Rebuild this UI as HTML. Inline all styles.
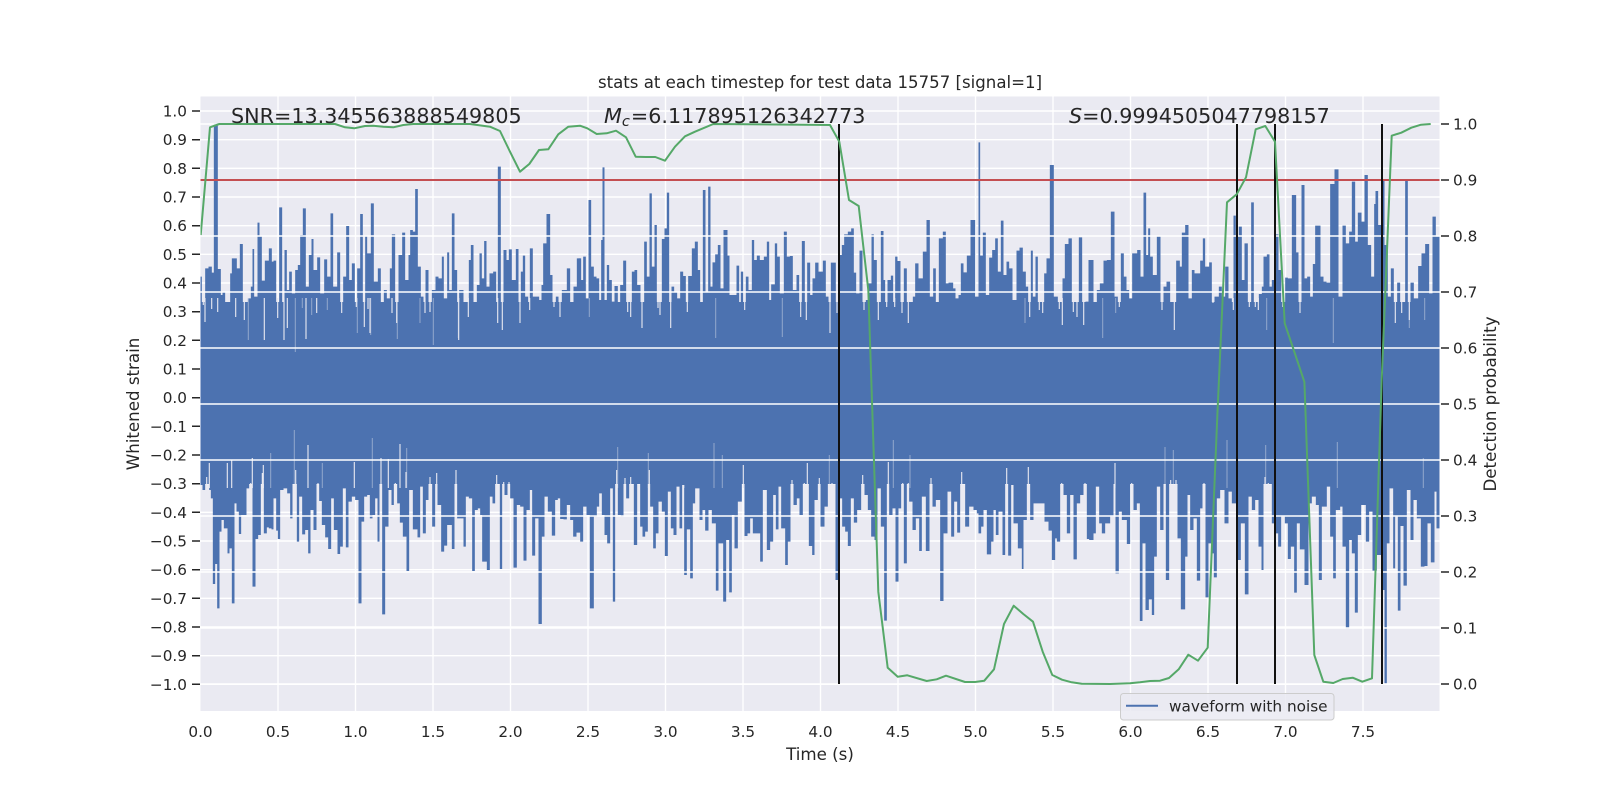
<!DOCTYPE html>
<html><head><meta charset="utf-8"><title>stats</title>
<style>html,body{margin:0;padding:0;background:#fff}svg{display:block}text{font-family:"DejaVu Sans","Liberation Sans",sans-serif;fill:#262626}</style>
</head><body>
<svg width="1600" height="800" viewBox="0 0 1600 800" xmlns="http://www.w3.org/2000/svg">
<defs><clipPath id="ax"><rect x="200.5" y="96.5" width="1239" height="614.5"/></clipPath></defs>
<rect x="200.5" y="96.5" width="1239" height="614.5" fill="#eaeaf2"/>
<g stroke="#fff" stroke-width="1.4" fill="none">
<path d="M278 96.5V711M355.5 96.5V711M433 96.5V711M510.5 96.5V711M588 96.5V711M665.5 96.5V711M743 96.5V711M820.5 96.5V711M898 96.5V711M975.5 96.5V711M1053 96.5V711M1130.5 96.5V711M1208 96.5V711M1285.5 96.5V711M1363 96.5V711"/>
<path d="M200.5 111H1439.5M200.5 139.7H1439.5M200.5 168.3H1439.5M200.5 197H1439.5M200.5 225.7H1439.5M200.5 254.3H1439.5M200.5 283H1439.5M200.5 311.7H1439.5M200.5 340.3H1439.5M200.5 369H1439.5M200.5 397.7H1439.5M200.5 426.3H1439.5M200.5 455H1439.5M200.5 483.7H1439.5M200.5 512.3H1439.5M200.5 541H1439.5M200.5 569.7H1439.5M200.5 598.3H1439.5M200.5 627H1439.5M200.5 655.7H1439.5M200.5 684.3H1439.5"/>
</g>
<g clip-path="url(#ax)" fill="#4c72b0">
<path transform="translate(178.5 90) scale(.33333)" d="M62 930V560H70V645H80V535H90V530H100V548H106V100H118V537H127V615H132V605H140V640H155V550H160V505H175V535H184V462H193V680H200V675H208V625H217V590H222V477H227V620H237V398H243V440H250V572H259V512H271V475H280V515H285V512H293V685H302V352H311V750H318V480H325V600H332V545H340V610H350V540H358V525H365V435H373V355H382V590H391V495H399V447H405V540H416V502H425V610H437V508H446V560H456V370H464V590H476V487H485V670H494V560H503V408H512V570H520V520H529V650H536V535H545V372H553V710H560V440H566V490H577V340H586V575H598V535H607V650H616V600H625V625H634V535H640V433H650V700H660V495H671V428H680V570H690V495H695V420H703V425H710V297H718V530H727V620H735V670H741V540H750V665H760V600H771V560H780V565H790V500H796V625H806V487H812V600H820V370H828V540H836V750H842V600H855V650H865V680H871V510H877V465H885V650H895V585H903V490H910V565H917V453H924V590H933V550H944V545H953V700H958V230H967V720H975V480H984V510H991V478H1000V570H1012V477H1020V700H1027V545H1033V497H1040V620H1049V660H1054V475H1063V620H1072V620H1082V630H1089V585H1094V460H1104V372H1115V555H1122V650H1132V620H1140V680H1150V600H1165V535H1175V650H1185V590H1195V505H1206V930Z"/>
<path transform="translate(578.5 90) scale(.33333)" d="M0 930V505H8V570H14V500H22V625H30V330H38V530H46V560H54V565H62V630H68V450H72V232H78V630H85V525H92V570H100V635H108V588H118V650H125V585H134V512H143V665H152V680H160V545H168V540H176V585H186V715H197V455H205V560H213V310H220V530H228V405H235V655H241V675H250V447H258V415H265V308H272V715H279V590H287V605H296V625H305V545H314V558H322V665H329V558H340V475H349V455H358V540H365V640H373V300H381V605H389V290H396V590H402V517H410V493H418V465H426V595H435V420H447V497H453V615H462V615H474V527H482V640H487V545H494V660H502V560H510V600H520V450H527V510H535V497H544V510H556V500H565V455H572V630H578V583H589V460H596V500H604V610H616V425H625V500H634V498H643V600H654V555H662V680H670V453H679V690H686V518H695V615H702V565H710V518H720V545H733V512H742V620H750V730H757V518H772V670H781V495H790V465H797V433H808V425H818V415H826V548H833V610H843V482H852V660H862V630H870V580H879V433H886V510H895V690H907V423H915V570H920V650H927V570H937V557H944V650H950V500H957V513H966V670H976V535H985V700H995V650H1003V620H1010V520H1020V565H1033V485H1044V390H1054V620H1064V535H1072V640H1081V445H1093V425H1102V580H1110V578H1124V595H1131V625H1140V615H1147V520H1155V547H1165V497H1176V390H1190V620H1204V930Z"/>
<path transform="translate(978.5 90) scale(.33333)" d="M0 930V157H5V497H13V428H22V615H32V503H41V480H50V445H58V545H67V392H75V555H84V515H92V535H102V630H114V482H123V473H133V545H142V590H149V680H157V482H163V620H171V500H178V660H188V670H197V550H204V505H214V225H226V620H238V658H247V705H252V565H259V462H270V445H280V665H291V680H301V442H311V705H321V635H330V510H345V655H355V600H364V580H375V512H385V510H397V365H408V620H418V650H427V490H436V560H444V600H452V625H461V490H468V490H476V480H486V560H495V308H503V495H509V415H515V500H523V555H535V440H546V660H555V590H564V575H575V640H583V720H593V512H604V530H610V428H620V405H630V625H640V540H648V550H655V550H665V512H673V445H680V530H692V517H700V640H708V620H721V590H730V620H740V530H750V625H760V660H765V377H772V440H781V410H790V570H798V460H808V650H818V337H826V650H835V660H841V612H850V590H855V500H865V493H873V590H880V570H890V433H900V540H908V650H920V563H928V565H940V315H953V487H960V670H969V285H978V565H986V560H995V620H1003V522H1010V407H1018V407H1026V560H1035V575H1044V578H1055V282H1068V238H1080V620H1092V407H1102V460H1112V425H1120V275H1130V455H1138V368H1149V395H1158V255H1168V465H1178V560H1187V342H1191V303H1199V405H1212V270H1218V465H1228V620H1237V535H1246V700H1256V578H1265V670H1280V272H1288V690H1296V578H1306V625H1319V528H1329V490H1340V462H1352V610H1362V380H1372V440H1390V930Z"/>
<path transform="translate(178.5 440) scale(.33333)" d="M62 -135V135H72V150H80V110H88V70H92V150H97V175H103V432H110V372H116V505H123V275H129V240H136V265H147V340H153V325H160V490H168V190H174V215H181V282H188V225H195V225H204V145H212V130H222V440H231V297H239V285H247V100H256V280H265V262H271V265H279V268H285V175H293V272H298V297H305V150H315V145H326V160H335V235H342V40H347V90H355V305H362V170H371V283H380V270H389V340H396V210H405V270H414V130H422V183H430V255H440V292H449V327H458V175H466V270H477V342H485V320H493V145H502V322H510V185H520V170H530V180H540V490H549V245H557V170H566V165H574V235H582V225H590V175H597V305H603V90H611V523H620V260H630V150H639V195H646V130H656V190H664V248H673V290H684V393H692V150H703V268H717V292H725V140H733V280H742V180H750V110H761V260H770V100H777V195H788V335H797V317H806V255H820V327H828V90H836V235H845V235H855V320H862V170H871V175H881V393H889V210H898V205H905V225H911V365H925V390H934V170H942V190H950V105H964V387H971V125H978V165H987V125H995V175H1005V383H1015V195H1025V200H1035V362H1044V210H1054V150H1061V347H1070V235H1080V552H1090V290H1098V170H1108V215H1120V287H1130V180H1138V175H1145V237H1155V238H1165V195H1175V240H1184V290H1194V278H1206V-135Z"/>
<path transform="translate(578.5 440) scale(.33333)" d="M0 -135V215H5V305H14V200H24V225H34V505H46V230H55V200H62V160H70V225H78V285H86V310H95V145H103V485H110V90H118V225H127V230H135V115H143V175H152V110H166V315H176V130H185V260H192V290H200V275H208V90H215V200H224V325H232V280H240V185H250V215H259V348H268V155H277V265H285V285H294V140H303V265H311V135H317V405H325V268H335V415H343V190H350V145H363V240H372V210H380V272H390V210H400V250H412V452H420V310H434V485H443V300H452V457H460V225H468V325H478V185H490V75H498V288H507V280H515V235H523V280H532V280H545V365H553V150H565V330H575V305H584V165H592V268H600V140H608V265H620V375H628V305H636V120H645V195H655V175H663V225H673V130H682V70H691V318H701V345H708V180H718V115H726V260H738V200H748V45H756V130H771V420H782V175H791V260H800V275H808V318H817V175H826V248H836V210H848V105H858V165H868V210H878V290H888V300H897V145H907V260H917V542H925V65H932V225H942V205H951V425H960V205H968V130H976V370H985V130H992V185H1002V270H1012V235H1022V333H1030V170H1042V333H1053V115H1062V200H1072V180H1085V483H1095V280H1107V155H1118V290H1127V185H1136V278H1145V95H1160V260H1172V200H1185V210H1195V220H1206V-135Z"/>
<path transform="translate(978.5 440) scale(.33333)" d="M0 -135V280H8V260H15V210H25V343H38V305H45V210H52V285H60V215H72V345H80V85H89V347H98V135H105V250H118V325H130V387H135V240H145V80H155V240H165V190H175V190H185V190H198V245H210V272H220V360H230V295H235V305H245V130H255V165H265V280H275V165H285V358H295V190H305V165H315V130H325V297H332V300H345V280H352V140H362V250H370V280H380V250H395V230H405V70H411V400H421V215H430V240H445V312H455V130H465V210H475V190H484V543H492V310H501V510H511V478H520V525H527V350H535V140H545V270H555V20H562V420H572V120H580V30H588V120H597V295H607V508H620V350H627V165H635V270H645V235H655V422H665V205H672V130H681V472H690V310H698V340H706V412H715V175H725V150H738V250H750V155H760V190H775V360H787V250H799V463H810V170H820V210H830V180H840V320H849V390H855V110H865V130H880V250H890V280H899V320H908V230H919V250H928V357H937V320H947V458H955V250H964V328H978V435H990V190H1000V170H1012V195H1021V420H1030V200H1045V140H1055V290H1064V415H1072V210H1085V200H1092V320H1102V566H1112V300H1120V340H1129V518H1138V285H1148V195H1162V305H1172V215H1182V392H1195V345H1208V370H1212V450H1218V730H1225V310H1233V145H1244V385H1250V230H1258V512H1266V258H1275V437H1285V150H1296V300H1305V180H1315V235H1327V380H1338V378H1347V250H1357V367H1368V155H1374V265H1390V-135Z"/>
<rect x="200.5" y="302" width="1239" height="182"/>
<path stroke="#eaeaf2" stroke-width="1.1" fill="none" d="M203.3 298V305M205 298V322M211.7 298V309M217.7 298V312M235.7 298V317M244.3 298V320M264.3 298V340M277.7 298V318M284 298V340M287.3 298V328M306 298V339M316.7 298V313M341.7 298V313M356.3 298V307M364.3 298V327M368 298V309M370 298V333M392 298V313M396.7 298V323M425 298V313M430 298V312M458.7 298V340M468.3 298V317M497.7 298V323M502.3 298V330M520 298V323M529.7 298V310M554 298V307M560 298V317M627.7 298V312M630.7 298V317M642 298V328M658 298V308M660 298V315M670.7 298V328M687.3 298V312M744.7 298V310M800.7 298V317M806.3 298V320M830 298V333M837 298V313M864 298V310M878.3 298V320M886.7 298V307M894.7 298V307M902 298V313M908.3 298V323M1029.7 298V317M1039.3 298V310M1042.7 298V313M1059.3 298V309M1062.3 298V325M1073.3 298V312M1077 298V317M1083.7 298V325M1119.3 298V307M1162 298V310M1174.3 298V330M1213 298V303M1233.3 298V310M1249.3 298V307M1255.3 298V307M1258.3 298V310M1282.7 298V307M1300 298V313M1395.3 298V323M1401.7 298V313M1409.3 298V320M206.7 488V477M209.3 488V463M227.3 488V463M231.7 488V460M250.7 488V483M252.3 488V458M262.3 488V473M263.3 488V465M295.7 488V470M308 488V445M318 488V483M354.3 488V462M381 488V458M388.3 488V459M395.3 488V483M400 488V444M406 488V472M430 488V477M436.7 488V473M456 488V470M496.7 488V475M503.7 488V482M509 488V482M616.7 488V470M625 488V478M630.7 488V477M649.3 488V470M683.7 488V485M743.3 488V465M792 488V480M804.3 488V483M807.3 488V463M819.3 488V478M832 488V483M862.7 488V475M888.3 488V462M902.7 488V483M908.3 488V483M931 488V478M961.7 488V472M1006.7 488V468M1028.3 488V467M1061.7 488V483M1085 488V483M1115 488V463M1131.7 488V483M1170.7 488V480M1176 488V480M1204 488V483M1265 488V477M1268.3 488V483"/>
<path stroke="#eaeaf2" stroke-width="1" stroke-opacity=".45" fill="none" d="M248.3 298V340M295.3 298V352M302.3 298V308M311.7 298V315M327.3 298V310M357.3 298V333M370.7 298V335M397.3 298V339M420 298V323M433.3 298V345M458.3 298V338M589.3 298V317M715.7 298V338M782.3 298V337M1025 298V323M1102.7 298V338M1115.7 298V313M1266.7 298V330M1333.3 298V343M1409.3 298V328M1424.7 298V320M270.7 488V453M294.3 488V430M322.3 488V463M372.3 488V438M406.7 488V448M617.7 488V447M648.3 488V453M714 488V443M722.3 488V455M829.3 488V455M893.3 488V440M910 488V455M1165 488V447M1173.3 488V450M1227 488V440M1265.7 488V445M1337.3 488V442M1423.3 488V458"/>
</g>
<g stroke="#fff" stroke-width="1.4" fill="none">
<path d="M200.5 124H1439.5M200.5 180H1439.5M200.5 236H1439.5M200.5 292H1439.5M200.5 348H1439.5M200.5 404H1439.5M200.5 460H1439.5M200.5 516H1439.5M200.5 572H1439.5M200.5 628H1439.5M200.5 684H1439.5"/>
</g>
<path d="M200.5 180H1439.5" stroke="#c44e52" stroke-width="2" fill="none"/>
<path d="M839 124V684M1237 124V684M1275 124V684M1382 124V684" stroke="#111" stroke-width="2" fill="none"/>
<polyline clip-path="url(#ax)" fill="none" stroke="#55a868" stroke-width="2" stroke-linejoin="round" points="200.7,235 210,127.3 219.3,124 335,124 345,127.3 354.3,128.3 365,126 373.3,125.7 383.3,126.7 393.3,127.3 403.3,125 413.3,124 470,124 490,126.7 500,131 510,151.7 520,171.7 529.3,164 539,150 548.3,149.3 558.3,134.3 568.3,126.7 580,125.7 587.3,128.3 596.7,134 606.7,133.3 616,130.7 626,137.3 635.7,156.7 645.7,157 655.3,157 665,160.7 675,146.7 685,136.3 695,131.7 713.3,124 830,125 839.3,141.7 849,200 858.7,206 868.3,290 878.3,591.7 887.7,667.7 897.7,676.7 907.3,675.3 926.7,681 936.7,679.3 946,675.7 965,682 975,682 984.3,680.7 994,669.3 1004,624 1013.7,605.7 1023.3,614 1033,621.7 1042.7,651.7 1052.3,675 1062,679.7 1071.7,682.3 1081.7,683.7 1110,684 1130,683.3 1140,682.3 1150,681 1160,680.7 1169,678 1178.7,669.3 1188.3,654.7 1198,660.7 1207.7,647.7 1217.4,414 1227,202.3 1236.7,194.3 1246,177.3 1255.7,129.3 1265.3,126 1275,141.7 1284.7,323.3 1294.4,352 1304.4,382 1314.3,655 1323.3,681.7 1333.3,683 1342.7,679 1352.7,677.7 1362.3,681.7 1372,678.3 1381.7,380 1391.7,135.7 1401.3,132.7 1411.3,127.7 1421,124.7 1430.7,124"/>
<g stroke="#262626" stroke-width="1.5" fill="none">
<path d="M192 111H200M192 139.7H200M192 168.3H200M192 197H200M192 225.7H200M192 254.3H200M192 283H200M192 311.7H200M192 340.3H200M192 369H200M192 397.7H200M192 426.3H200M192 455H200M192 483.7H200M192 512.3H200M192 541H200M192 569.7H200M192 598.3H200M192 627H200M192 655.7H200M192 684.3H200"/>
<path d="M1441 124H1449M1441 180H1449M1441 236H1449M1441 292H1449M1441 348H1449M1441 404H1449M1441 460H1449M1441 516H1449M1441 572H1449M1441 628H1449M1441 684H1449"/>
</g>
<g font-size="15.28" text-anchor="end">
<text x="187" y="116.5">1.0</text><text x="187" y="145.2">0.9</text><text x="187" y="173.8">0.8</text><text x="187" y="202.5">0.7</text><text x="187" y="231.2">0.6</text><text x="187" y="259.8">0.5</text><text x="187" y="288.5">0.4</text><text x="187" y="317.2">0.3</text><text x="187" y="345.8">0.2</text><text x="187" y="374.5">0.1</text><text x="187" y="403.2">0.0</text><text x="187" y="431.8">−0.1</text><text x="187" y="460.5">−0.2</text><text x="187" y="489.2">−0.3</text><text x="187" y="517.8">−0.4</text><text x="187" y="546.5">−0.5</text><text x="187" y="575.2">−0.6</text><text x="187" y="603.8">−0.7</text><text x="187" y="632.5">−0.8</text><text x="187" y="661.2">−0.9</text><text x="187" y="689.8">−1.0</text>
</g>
<g font-size="15.28">
<text x="1453" y="129.5">1.0</text><text x="1453" y="185.5">0.9</text><text x="1453" y="241.5">0.8</text><text x="1453" y="297.5">0.7</text><text x="1453" y="353.5">0.6</text><text x="1453" y="409.5">0.5</text><text x="1453" y="465.5">0.4</text><text x="1453" y="521.5">0.3</text><text x="1453" y="577.5">0.2</text><text x="1453" y="633.5">0.1</text><text x="1453" y="689.5">0.0</text>
</g>
<g font-size="15.28" text-anchor="middle">
<text x="200.5" y="737">0.0</text><text x="278" y="737">0.5</text><text x="355.5" y="737">1.0</text><text x="433" y="737">1.5</text><text x="510.5" y="737">2.0</text><text x="588" y="737">2.5</text><text x="665.5" y="737">3.0</text><text x="743" y="737">3.5</text><text x="820.5" y="737">4.0</text><text x="898" y="737">4.5</text><text x="975.5" y="737">5.0</text><text x="1053" y="737">5.5</text><text x="1130.5" y="737">6.0</text><text x="1208" y="737">6.5</text><text x="1285.5" y="737">7.0</text><text x="1363" y="737">7.5</text>
</g>
<text x="820" y="88" font-size="16.6" text-anchor="middle">stats at each timestep for test data 15757 [signal=1]</text>
<text x="820" y="760" font-size="16.67" text-anchor="middle">Time (s)</text>
<text transform="translate(139 404) rotate(-90)" font-size="16.67" text-anchor="middle">Whitened strain</text>
<text transform="translate(1496 404) rotate(-90)" font-size="16.67" text-anchor="middle">Detection probability</text>
<text x="231" y="123" font-size="20.7">SNR=13.345563888549805</text>
<text x="604" y="123" font-size="20.7"><tspan font-style="italic">M</tspan><tspan font-style="italic" font-size="14.6" dy="3">c</tspan><tspan dy="-3" dx="1">=6.117895126342773</tspan></text>
<text x="1069" y="123" font-size="20.7"><tspan font-style="italic">S</tspan>=0.9994505047798157</text>
<rect x="1120.5" y="693.5" width="213.5" height="26.5" rx="3" fill="#eaeaf2" fill-opacity=".85" stroke="#cccccc" stroke-width="1"/>
<path d="M1126 705.7H1158" stroke="#4c72b0" stroke-width="2" fill="none"/>
<text x="1169" y="711.5" font-size="15.28">waveform with noise</text>
</svg>
</body></html>
